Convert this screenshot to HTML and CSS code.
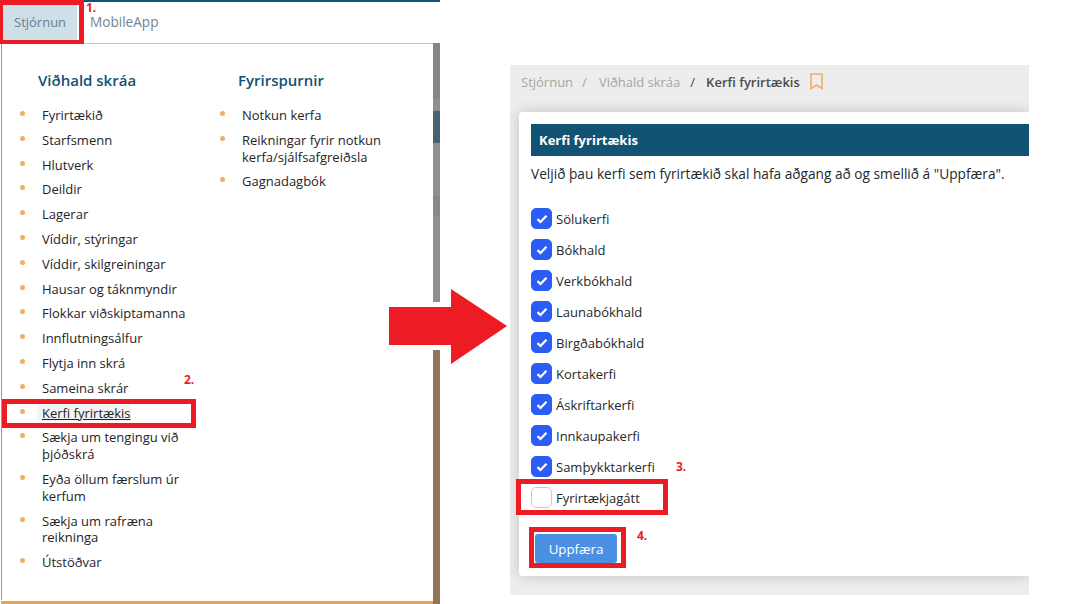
FILE: index.html
```html
<!DOCTYPE html>
<html lang="en">

<head>
  <meta charset="UTF-8">
  <title>Kerfi fyrirtækis</title>
  <link rel="stylesheet" href="styles.css">
</head>

<body>
  <div class="page">
    <div class="left">
      <div class="topline"></div>
      <div class="nav">
        <div class="tab active">Stjórnun</div>
        <div class="tab">MobileApp</div>
      </div>
      <div class="menu">
        <div class="menu-col first">
          <h3>Viðhald skráa</h3>
          <ul>
            <li>Fyrirtækið</li>
            <li>Starfsmenn</li>
            <li>Hlutverk</li>
            <li>Deildir</li>
            <li>Lagerar</li>
            <li>Víddir, stýringar</li>
            <li>Víddir, skilgreiningar</li>
            <li>Hausar og táknmyndir</li>
            <li>Flokkar viðskiptamanna</li>
            <li>Innflutningsálfur</li>
            <li>Flytja inn skrá</li>
            <li>Sameina skrár</li>
            <li class="current"><span>Kerfi fyrirtækis</span></li>
            <li>Sækja um tengingu við þjóðskrá</li>
            <li>Eyða öllum færslum úr kerfum</li>
            <li>Sækja um rafræna reikninga</li>
            <li>Útstöðvar</li>
          </ul>
        </div>
        <div class="menu-col">
          <h3>Fyrirspurnir</h3>
          <ul>
            <li>Notkun kerfa</li>
            <li>Reikningar fyrir notkun kerfa/sjálfsafgreiðsla</li>
            <li>Gagnadagbók</li>
          </ul>
        </div>
      </div>
      <div class="strip">
        <div class="s1"></div>
        <div class="s2"></div>
        <div class="s3"></div>
        <div class="s4"></div>
        <div class="s5"></div>
        <div class="s4"></div>
        <div class="gap"></div>
        <div class="s6"></div>
      </div>
      <div class="menu-bottom"></div>

      <div class="mark mark-tab"></div>
      <div class="mark mark-item"></div>
      <div class="num n1">1.</div>
      <div class="num n2">2.</div>
    </div>

    <svg class="arrow" width="120" height="76" viewBox="0 0 120 76">
      <polygon points="0,18 62,18 62,0 118,37 62,75 62,56 0,56" fill="#ed1c24" />
    </svg>

    <div class="right">
      <div class="crumbs">
        <span class="crumb">Stjórnun</span>
        <span class="sep">/</span>
        <span class="crumb">Viðhald skráa</span>
        <span class="sep dark">/</span>
        <b>Kerfi fyrirtækis</b>
        <svg class="bookmark" width="13" height="17" viewBox="0 0 13 17">
          <path d="M1 1H12V15.5L6.5 12L1 15.5Z" fill="none" stroke="#f2ae64" stroke-width="1.6" />
        </svg>
      </div>
      <div class="card">
        <div class="card-head">Kerfi fyrirtækis</div>
        <p class="intro">Veljið þau kerfi sem fyrirtækið skal hafa aðgang að og smellið á "Uppfæra".</p>
        <div class="checks">
          <div class="check"><span class="box on"><svg width="12" height="10" viewBox="0 0 12 10"><path d="M1.5 5.2L4.5 8L10.5 1.8" fill="none" stroke="#fff" stroke-width="2.3" /></svg></span>Sölukerfi</div>
          <div class="check"><span class="box on"><svg width="12" height="10" viewBox="0 0 12 10"><path d="M1.5 5.2L4.5 8L10.5 1.8" fill="none" stroke="#fff" stroke-width="2.3" /></svg></span>Bókhald</div>
          <div class="check"><span class="box on"><svg width="12" height="10" viewBox="0 0 12 10"><path d="M1.5 5.2L4.5 8L10.5 1.8" fill="none" stroke="#fff" stroke-width="2.3" /></svg></span>Verkbókhald</div>
          <div class="check"><span class="box on"><svg width="12" height="10" viewBox="0 0 12 10"><path d="M1.5 5.2L4.5 8L10.5 1.8" fill="none" stroke="#fff" stroke-width="2.3" /></svg></span>Launabókhald</div>
          <div class="check"><span class="box on"><svg width="12" height="10" viewBox="0 0 12 10"><path d="M1.5 5.2L4.5 8L10.5 1.8" fill="none" stroke="#fff" stroke-width="2.3" /></svg></span>Birgðabókhald</div>
          <div class="check"><span class="box on"><svg width="12" height="10" viewBox="0 0 12 10"><path d="M1.5 5.2L4.5 8L10.5 1.8" fill="none" stroke="#fff" stroke-width="2.3" /></svg></span>Kortakerfi</div>
          <div class="check"><span class="box on"><svg width="12" height="10" viewBox="0 0 12 10"><path d="M1.5 5.2L4.5 8L10.5 1.8" fill="none" stroke="#fff" stroke-width="2.3" /></svg></span>Áskriftarkerfi</div>
          <div class="check"><span class="box on"><svg width="12" height="10" viewBox="0 0 12 10"><path d="M1.5 5.2L4.5 8L10.5 1.8" fill="none" stroke="#fff" stroke-width="2.3" /></svg></span>Innkaupakerfi</div>
          <div class="check"><span class="box on"><svg width="12" height="10" viewBox="0 0 12 10"><path d="M1.5 5.2L4.5 8L10.5 1.8" fill="none" stroke="#fff" stroke-width="2.3" /></svg></span>Samþykktarkerfi</div>
          <div class="check"><span class="box"></span>Fyrirtækjagátt</div>
        </div>
        <button class="update">Uppfæra</button>
      </div>

      <div class="mark mark-check"></div>
      <div class="mark mark-btn"></div>
      <div class="num n3">3.</div>
      <div class="num n4">4.</div>
    </div>
  </div>
</body>

</html>
```

FILE: styles.css
```css
* {
  margin: 0px;
  padding: 0px;
  box-sizing: border-box;
  font-family: "Open Sans", "Noto Sans", sans-serif;
}

body {
  background-color: white;
  overflow: hidden;
}

.page {
  position: relative;
  width: 1080px;
  height: 604px;
  display: flex;
}

/* left screenshot */
.left {
  position: relative;
  width: 440px;
  height: 604px;
  flex: none;
}

.topline {
  height: 2px;
  background-color: #125273;
}

.nav {
  display: flex;
  height: 42px;
  padding-left: 3px;
  border-bottom: 1px solid #b9cbd5;
}

.tab {
  padding: 0 11px 0 0;
  font-size: 13.6px;
  line-height: 39px;
  color: #6f8494;
}

.tab.active {
  width: 74px;
  height: 38px;
  margin-top: 3px;
  margin-right: 13px;
  padding-left: 11px;
  font-size: 13px;
  line-height: 35px;
  color: #6a7f8f;
  background-color: #cde0e8;
}

.menu {
  display: flex;
  height: 556px;
  margin-left: 1px;
  margin-right: 7px;
  border-left: 1px solid #999;
  padding-top: 26px;
}

.menu-col {
  width: 200px;
}

.menu-col h3 {
  margin-left: 36px;
  font-size: 15px;
  line-height: 20px;
  font-weight: 600;
  color: #125273;
  margin-bottom: 13px;
}

.menu-col ul {
  list-style: none;
}

.menu-col li {
  position: relative;
  padding-left: 40px;
  font-size: 13px;
  line-height: 16.8px;
  color: #1f2327;
  padding-top: 4px;
  padding-bottom: 4px;
  width: 191px;
}

.menu-col li::before {
  content: "";
  position: absolute;
  left: 18px;
  top: 8px;
  width: 5px;
  height: 5px;
  border-radius: 50%;
  background-color: #f2ae64;
}

.menu-col li.current span {
  background-color: #f3f3f3;
  text-decoration: underline;
  display: inline-block;
  margin-left: -5px;
  padding-left: 5px;
}

.strip {
  position: absolute;
  right: 0;
  top: 43px;
  width: 7px;
  height: 561px;
  display: flex;
  flex-direction: column;
}

.s1 {
  height: 56px;
  background-color: #868686;
}

.s2 {
  height: 12px;
  background-color: #8e8e8e;
}

.s3 {
  height: 32px;
  background-color: #4a6170;
}

.s4 {
  height: 53px;
  background-color: #909090;
}

.s5 {
  height: 20px;
  background-color: #888888;
}

.s4 + .s5 + .s4 {
  height: 86px;
}

.gap {
  height: 48px;
}

.s6 {
  flex: 1;
  background-color: #937657;
}

.menu-bottom {
  position: absolute;
  left: 1px;
  right: 7px;
  bottom: 0;
  height: 3px;
  background-color: #e8a352;
}

/* arrow */
.arrow {
  position: absolute;
  left: 389px;
  top: 289px;
}

/* right screenshot */
.right {
  position: absolute;
  left: 510px;
  top: 65px;
  width: 519px;
  height: 530px;
  background-color: #ededed;
  padding: 0 0 0 9px;
  overflow: hidden;
}

.crumbs {
  display: flex;
  align-items: center;
  height: 33px;
  padding-left: 2px;
  font-size: 13px;
  color: #a5a5a5;
}

.sep {
  margin: 0 12px 0 9px;
}

.sep.dark {
  color: #444;
  margin: 0 11px 0 10px;
}

.crumbs b {
  color: #4b4b4b;
  font-weight: 600;
}

.bookmark {
  margin-left: 10px;
}

.card {
  margin-top: 14px;
  height: 464px;
  background-color: white;
  border-radius: 4px 0 0 4px;
  padding: 12px 0 0 12px;
  box-shadow: 0 0 14px rgba(0, 0, 0, 0.18);
}

.card-head {
  height: 32px;
  padding-left: 8px;
  line-height: 32px;
  font-size: 13px;
  font-weight: 700;
  color: white;
  background-color: #125273;
}

.intro {
  margin-top: 9px;
  font-size: 13.7px;
  line-height: 18px;
  color: #23282d;
  margin-bottom: 20px;
}

.check {
  display: flex;
  align-items: center;
  height: 31px;
  font-size: 13px;
  color: #23282d;
}

.box {
  display: flex;
  align-items: center;
  justify-content: center;
  width: 21px;
  height: 21px;
  margin-right: 4px;
  border-radius: 5px;
  border: 1px solid #c4c8e8;
}

.box.on {
  background-color: #2c5cf6;
  border-color: #2c5cf6;
}

.update {
  display: block;
  margin: 21px 0 0 4px;
  width: 82px;
  height: 29px;
  border: none;
  border-radius: 3px;
  background-color: #4a90e2;
  color: white;
  font-size: 13.3px;
}

/* red annotations */
.mark {
  position: absolute;
  border: 5px solid #ed1c24;
}

.mark-tab {
  left: 0;
  top: 0;
  width: 84px;
  height: 44px;
  border-left-width: 3px;
  border-bottom-width: 4px;
}

.mark-item {
  left: 2px;
  top: 399px;
  width: 194px;
  height: 29px;
}

.mark-check {
  left: 6px;
  top: 414px;
  width: 152px;
  height: 36px;
}

.mark-btn {
  left: 19px;
  top: 462px;
  width: 97px;
  height: 41px;
}

.num {
  position: absolute;
  font-size: 12px;
  line-height: 14px;
  font-weight: 700;
  color: #ed1c24;
}

.n1 {
  left: 86px;
  top: 1px;
}

.n2 {
  left: 184px;
  top: 373px;
}

.n3 {
  left: 166px;
  top: 395px;
}

.n4 {
  left: 127px;
  top: 464px;
}
```
